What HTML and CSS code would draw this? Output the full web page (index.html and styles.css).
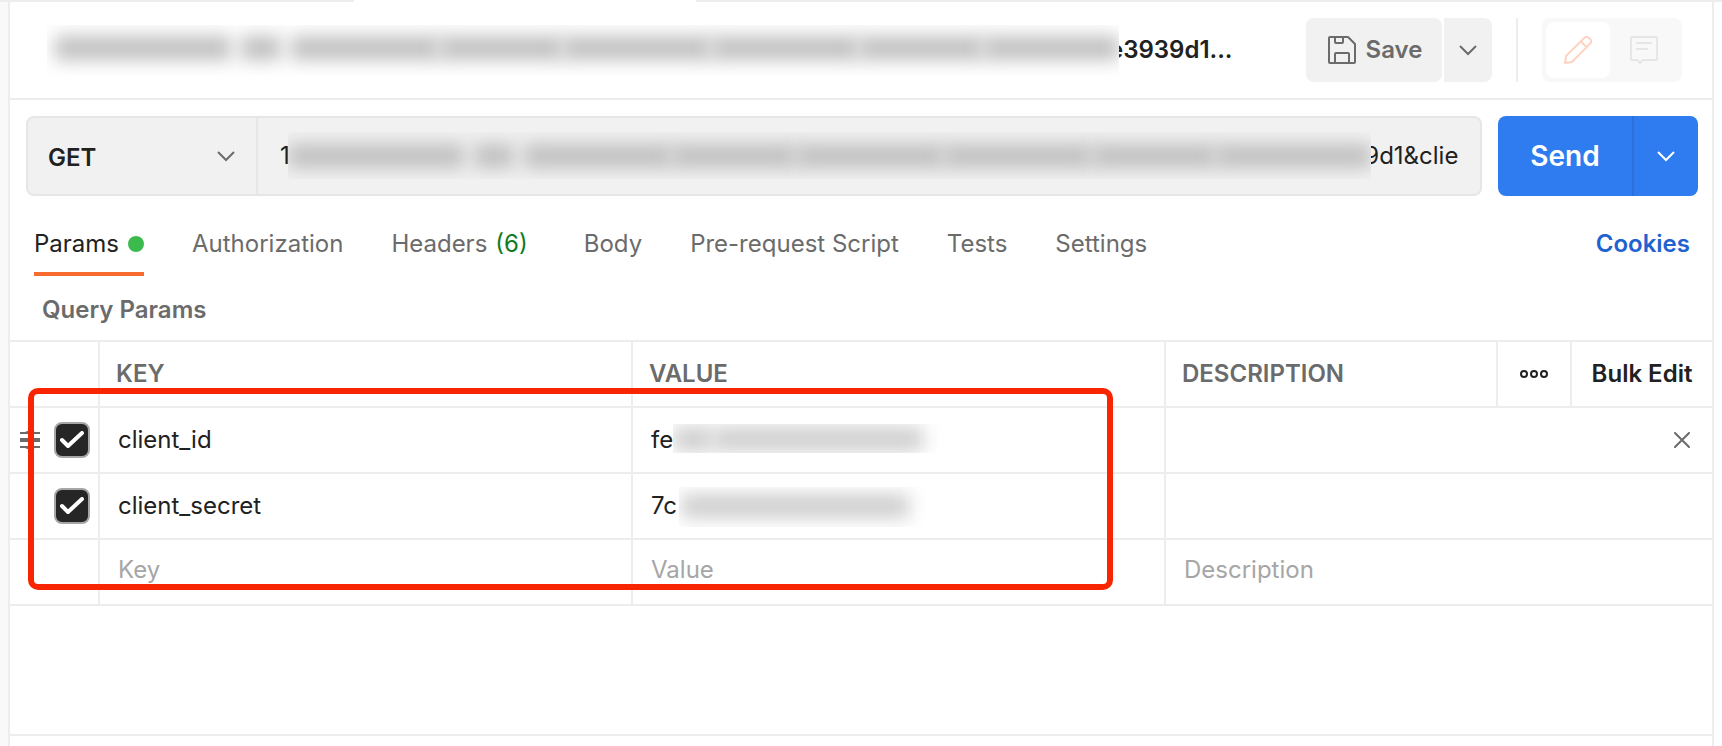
FILE: index.html
```html
<!DOCTYPE html>
<html lang="en">
<head>
    <meta charset="UTF-8">
    <meta name="viewport" content="width=device-width, initial-scale=1.0">
    <title>Request</title>
    <link rel="stylesheet" href="styles.css">
</head>
<body>
    <div class="tab-strip">
        <span class="tab-before"></span>
        <span class="tab-active"></span>
        <span class="tab-after"></span>
    </div>

    <main class="panel">
        <header class="request-header">
            <h1 class="request-title">
                <span class="mask mask-title"><i class="w5"></i><i class="w1"></i><i class="w4 join"></i><i class="w3 join"></i><i class="w4 join"></i><i class="w4 join"></i><i class="w3 join"></i><i class="rest"></i></span>
                <span class="title-text">e3939d1...</span>
            </h1>
            <div class="save-group">
                <button class="btn save-btn">
                    <svg width="28" height="28" viewBox="0 0 28 28" fill="none" stroke="currentColor" stroke-width="2" stroke-linejoin="round">
                        <path d="M1 2a1 1 0 0 1 1-1h18l7 7v18a1 1 0 0 1-1 1H2a1 1 0 0 1-1-1z"/>
                        <path d="M7 1v5a1 1 0 0 0 1 1h6a1 1 0 0 0 1-1V1M7 27V18a1 1 0 0 1 1-1h12a1 1 0 0 1 1 1v9"/>
                    </svg>
                    Save
                </button>
                <button class="btn save-more" aria-label="Save options">
                    <svg class="chevron" width="18" height="12" viewBox="0 0 18 12"><path d="M1 2l8 8 8-8"/></svg>
                </button>
            </div>
            <span class="separator"></span>
            <div class="mode-toggle">
                <button class="mode active" aria-label="Build">
                    <svg width="28" height="28" viewBox="0 0 28 28" fill="none" stroke="currentColor" stroke-width="2" stroke-linejoin="round">
                        <path d="M1 27l1-7L20.500 1.800a3 3 0 0 1 4.200 0l1.500 1.500a3 3 0 0 1 0 4.200L8 26zM17 5.500l5.500 5.500"/>
                    </svg>
                </button>
                <button class="mode" aria-label="Comments">
                    <svg width="28" height="28" viewBox="0 0 28 28" fill="none" stroke="currentColor" stroke-width="2" stroke-linejoin="round">
                        <path d="M2 1h24a1 1 0 0 1 1 1v21a1 1 0 0 1-1 1H13l-3 3-3-3H2a1 1 0 0 1-1-1V2a1 1 0 0 1 1-1zM6 7h16M6 13h12"/>
                    </svg>
                </button>
            </div>
        </header>

        <form class="request-bar" onsubmit="return false">
            <div class="url-group">
                <div class="method">
                    <select class="method-select" aria-label="Method">
                        <option>GET</option>
                        <option>POST</option>
                        <option>PUT</option>
                        <option>DELETE</option>
                    </select>
                    <svg class="chevron" width="18" height="12" viewBox="0 0 18 12"><path d="M1 2l8 8 8-8"/></svg>
                </div>
                <div class="url">
                    <input class="url-input" type="text" aria-label="Request URL" value="1xxxxxxxxxxxx xxx xxxxxxxxxxxxxxxxxxxxxxxxxxxxxxxxxxxxxx_xxxxxxxxxxxxx_xxxxxxxxxxx009d1&amp;client_secret">
                    <span class="mask mask-url"><i class="w5"></i><i class="w1"></i><i class="w4 join"></i><i class="w3 join"></i><i class="w4 join"></i><i class="w4 join"></i><i class="w3 join"></i><i class="rest"></i></span>
                </div>
            </div>
            <div class="send-group">
                <button class="send-btn">Send</button>
                <button class="send-more" aria-label="Send options">
                    <svg class="chevron" width="18" height="12" viewBox="0 0 18 12"><path d="M1 2l8 8 8-8"/></svg>
                </button>
            </div>
        </form>

        <nav class="tabs">
            <a class="tab current" href="#params">Params<span class="dot"></span></a>
            <a class="tab" href="#authorization">Authorization</a>
            <a class="tab tab-headers" href="#headers">Headers <span class="count">(6)</span></a>
            <a class="tab" href="#body">Body</a>
            <a class="tab" href="#pre-request">Pre-request Script</a>
            <a class="tab" href="#tests">Tests</a>
            <a class="tab" href="#settings">Settings</a>
            <a class="cookies" href="#cookies">Cookies</a>
        </nav>

        <section class="params" id="params">
            <h2 class="section-title">Query Params</h2>
            <div class="table-wrap">
                <table class="params-table">
                    <colgroup>
                        <col class="col-check">
                        <col>
                        <col>
                        <col class="col-desc">
                        <col class="col-more">
                        <col class="col-bulk">
                    </colgroup>
                    <thead>
                        <tr>
                            <th></th>
                            <th>KEY</th>
                            <th>VALUE</th>
                            <th>DESCRIPTION</th>
                            <th class="center">
                                <button class="plain" aria-label="Columns">
                                    <svg width="28" height="8" viewBox="0 0 28 8" fill="none" stroke="currentColor" stroke-width="2">
                                        <circle cx="4" cy="4" r="3"/><circle cx="14" cy="4" r="3"/><circle cx="24" cy="4" r="3"/>
                                    </svg>
                                </button>
                            </th>
                            <th class="center"><button class="plain">Bulk Edit</button></th>
                        </tr>
                    </thead>
                    <tbody>
                        <tr>
                            <td>
                                <div class="row-tools">
                                    <svg class="grip" width="20" height="20" viewBox="0 0 20 20">
                                        <path d="M0 2h5l5-2 5 2h5v2H0zM0 8h20v4H0zM0 16h20v2h-5l-5 2-5-2H0z"/>
                                    </svg>
                                    <label class="check">
                                        <input type="checkbox" aria-label="Use client_id" checked>
                                        <svg width="24" height="18" viewBox="0 0 24 18"><path d="M2 9l6 6L22 2"/></svg>
                                    </label>
                                </div>
                            </td>
                            <td><input class="cell-input" type="text" aria-label="Key 1" value="client_id"></td>
                            <td class="masked"><input class="cell-input" type="text" aria-label="Value 1" value="fe"><span class="mask mask-id"><i class="w1 join"></i><i class="rest"></i></span></td>
                            <td colspan="3">
                                <div class="desc-cell">
                                    <input class="cell-input" type="text" aria-label="Description 1">
                                    <button class="remove" aria-label="Remove">
                                        <svg width="16" height="16" viewBox="0 0 16 16" fill="none" stroke="currentColor" stroke-width="2" stroke-linecap="round"><path d="M1 1l14 14M15 1L1 15"/></svg>
                                    </button>
                                </div>
                            </td>
                        </tr>
                        <tr>
                            <td>
                                <div class="row-tools">
                                    <label class="check">
                                        <input type="checkbox" aria-label="Use client_secret" checked>
                                        <svg width="24" height="18" viewBox="0 0 24 18"><path d="M2 9l6 6L22 2"/></svg>
                                    </label>
                                </div>
                            </td>
                            <td><input class="cell-input" type="text" aria-label="Key 2" value="client_secret"></td>
                            <td class="masked"><input class="cell-input" type="text" aria-label="Value 2" value="7c"><span class="mask mask-secret"><i class="rest"></i></span></td>
                            <td colspan="3"><input class="cell-input" type="text" aria-label="Description 2"></td>
                        </tr>
                        <tr class="new-row">
                            <td></td>
                            <td><input class="cell-input" type="text" aria-label="New key" placeholder="Key"></td>
                            <td><input class="cell-input" type="text" aria-label="New value" placeholder="Value"></td>
                            <td colspan="3"><input class="cell-input" type="text" aria-label="New description" placeholder="Description"></td>
                        </tr>
                    </tbody>
                </table>
                <div class="highlight"></div>
            </div>
        </section>

        <footer class="panel-footer"></footer>
    </main>
</body>
</html>
```
FILE: styles.css
```css
* {
    box-sizing: border-box;
}
body {
    margin: 0;
    min-height: 100vh;
    display: flex;
    flex-direction: column;
    font-family: Inter, sans-serif;
    font-size: 24px;
    line-height: 32px;
    color: #212121;
    background: linear-gradient(to right, #f9f9f9 8px, #fff 8px);
}
button, input, select {
    font: inherit;
    color: inherit;
}
button {
    border: none;
    background: none;
    padding: 0;
    cursor: pointer;
}
a {
    color: inherit;
    text-decoration: none;
}
svg {
    display: block;
    flex: none;
}
.tab-strip {
    display: flex;
    height: 2px;
}
.tab-before {
    width: 354px;
    background: #ededed;
}
.tab-active {
    width: 342px;
    background: #fff;
}
.tab-after {
    flex: 1;
    background: #ededed;
}
.panel {
    flex: 1;
    display: flex;
    flex-direction: column;
    margin: 0 8px;
    border: 2px solid #ededed;
    border-width: 0 2px;
    background: #fff;
}
.chevron {
    fill: none;
    stroke: currentColor;
    stroke-width: 2;
    color: #6b6b6b;
}

/* redacted text: blurred bars, one per word */
.mask {
    display: flex;
    overflow: hidden;
    background: #fff;
}
.mask i {
    flex: none;
    height: 24px;
    margin-right: 10px;
    background: #bfbfbf;
    filter: blur(9px);
}
.mask .join {
    margin-right: 0;
}
.mask .rest {
    flex: 1;
    margin-right: 0;
}
.w1 {
    width: 40px;
}
.w3 {
    width: 124px;
}
.w4 {
    width: 148px;
}
.w5 {
    width: 176px;
}

/* header */
.request-header {
    display: flex;
    align-items: center;
    height: 98px;
    padding: 0 30px 0 37px;
    border-bottom: 2px solid #ededed;
}
.request-title {
    flex: 1;
    display: flex;
    align-items: center;
    margin: 0;
    font-size: 24px;
    font-weight: 600;
    white-space: nowrap;
}
.mask-title {
    z-index: 1;
    width: 1072px;
    height: 51px;
    padding: 11px 0 0 8px;
}
.title-text {
    margin-left: -10px;
}
.save-group {
    display: flex;
    gap: 2px;
}
.btn {
    display: flex;
    align-items: center;
    justify-content: center;
    gap: 10px;
    height: 64px;
    font-weight: 600;
    color: #6b6b6b;
    background: #f1f1f1;
}
.save-btn {
    width: 136px;
    padding-left: 2px;
    border-radius: 8px;
}
.save-more {
    width: 48px;
    border-radius: 0 8px 8px 0;
}
.separator {
    width: 2px;
    height: 64px;
    margin: 0 24px;
    background: #ededed;
}
.mode-toggle {
    display: flex;
    width: 140px;
    padding: 4px;
    border-radius: 8px;
    background: #f8f8f8;
}
.mode {
    display: flex;
    align-items: center;
    justify-content: center;
    width: 68px;
    height: 56px;
    border-radius: 8px;
    color: #e6e6e6;
}
.mode.active {
    width: 64px;
    color: #ffd3c4;
    background: #fff;
}

/* url bar */
.request-bar {
    display: flex;
    gap: 16px;
    padding: 16px 14px 0 16px;
}
.url-group {
    flex: 1;
    display: flex;
    height: 80px;
    border: 2px solid #e6e6e6;
    border-radius: 8px;
    background: #f1f1f1;
}
.method {
    display: grid;
    align-items: center;
    width: 230px;
    border-right: 2px solid #e6e6e6;
}
.method-select, .method .chevron {
    grid-area: 1 / 1;
}
.method-select {
    appearance: none;
    height: 76px;
    padding: 4px 20px 0;
    border: none;
    background: none;
    font-weight: 600;
}
.method .chevron {
    justify-self: end;
    margin-right: 21px;
    pointer-events: none;
}
.url {
    position: relative;
    flex: 1;
    display: flex;
    padding: 0 20px 0 22px;
}
.url-input {
    width: 100%;
    padding: 0;
    border: none;
    background: none;
}
.mask-url {
    position: absolute;
    left: 30px;
    right: 109px;
    top: 14px;
    height: 47px;
    padding-top: 12px;
    background: #f1f1f1;
}
.send-group {
    display: flex;
    width: 200px;
    border-radius: 8px;
    color: #fff;
    background: #2f7cf0;
}
.send-btn {
    flex: 1;
    font-size: 28px;
    font-weight: 600;
}
.send-more {
    display: flex;
    align-items: center;
    justify-content: center;
    width: 66px;
    border-left: 2px solid #2b70db;
}
.send-more .chevron {
    color: #fff;
}

/* tabs */
.tabs {
    display: flex;
    gap: 48px;
    margin-top: 18px;
    padding: 0 22px 0 24px;
}
.tab {
    display: flex;
    align-items: center;
    height: 62px;
    padding-top: 2px;
    border-bottom: 4px solid transparent;
    color: #6b6b6b;
}
.tab.current {
    gap: 9px;
    color: #212121;
    border-color: #f76b2e;
}
.tab-headers {
    gap: 8px;
    margin-right: 8px;
}
.dot {
    width: 16px;
    height: 16px;
    border-radius: 50%;
    background: #3dba4e;
}
.count {
    color: #0f7b22;
}
.cookies {
    margin-left: auto;
    padding-top: 14px;
    font-weight: 600;
    color: #1f62d0;
}

/* params table */
.params {
    flex: 1;
}
.section-title {
    margin: 0;
    padding: 18px 32px 14px;
    font-size: 24px;
    font-weight: 600;
    color: #6b6b6b;
}
.table-wrap {
    position: relative;
}
.params-table {
    width: 100%;
    table-layout: fixed;
    border-spacing: 0;
    border-top: 2px solid #ededed;
}
.col-check {
    width: 88px;
}
.col-desc {
    width: 332px;
}
.col-more {
    width: 74px;
}
.col-bulk {
    width: 142px;
}
th, td {
    height: 66px;
    padding: 0;
    border-left: 2px solid #ededed;
    border-bottom: 2px solid #ededed;
}
th:first-child, td:first-child {
    border-left: none;
}
th {
    padding-left: 16px;
    text-align: left;
    font-weight: 600;
    color: #6b6b6b;
}
th.center {
    padding: 0;
}
.plain {
    display: block;
    margin: 0 auto;
    font-weight: 600;
    color: #212121;
}
.cell-input {
    display: block;
    width: 100%;
    height: 64px;
    padding: 0 18px 2px;
    border: none;
    background: none;
}
.cell-input::placeholder {
    color: #a6a6a6;
    opacity: 1;
}
.new-row .cell-input {
    padding-bottom: 6px;
}
.masked {
    position: relative;
}
.masked .mask {
    position: absolute;
}
.masked .mask i {
    background: #cecece;
}
.mask-id {
    left: 40px;
    top: 16px;
    width: 290px;
    height: 29px;
    padding: 3px 40px 0 0;
}
.mask-secret {
    left: 46px;
    top: 13px;
    width: 270px;
    height: 40px;
    padding: 7px 40px 0 2px;
}
.desc-cell {
    display: flex;
    align-items: center;
    padding-right: 22px;
}
.remove {
    color: #6b6b6b;
}
.row-tools {
    display: flex;
    align-items: center;
    justify-content: flex-end;
    gap: 14px;
    padding-right: 8px;
}
.grip {
    fill: #6b6b6b;
}
.check {
    display: grid;
    place-items: center;
}
.check input, .check svg {
    grid-area: 1 / 1;
}
.check input {
    appearance: none;
    width: 36px;
    height: 36px;
    margin: 0;
    border: 2px solid #a6a6a6;
    border-radius: 8px;
}
.check input:checked {
    background: #262626;
}
.check svg {
    z-index: 1;
    fill: none;
    stroke: #fff;
    stroke-width: 4;
    stroke-linecap: round;
    stroke-linejoin: round;
    pointer-events: none;
}
.highlight {
    position: absolute;
    left: 18px;
    right: 599px;
    top: 48px;
    height: 202px;
    border: 6px solid #f92500;
    border-radius: 10px;
    pointer-events: none;
}
.panel-footer {
    height: 12px;
    border-top: 2px solid #ededed;
}
```
